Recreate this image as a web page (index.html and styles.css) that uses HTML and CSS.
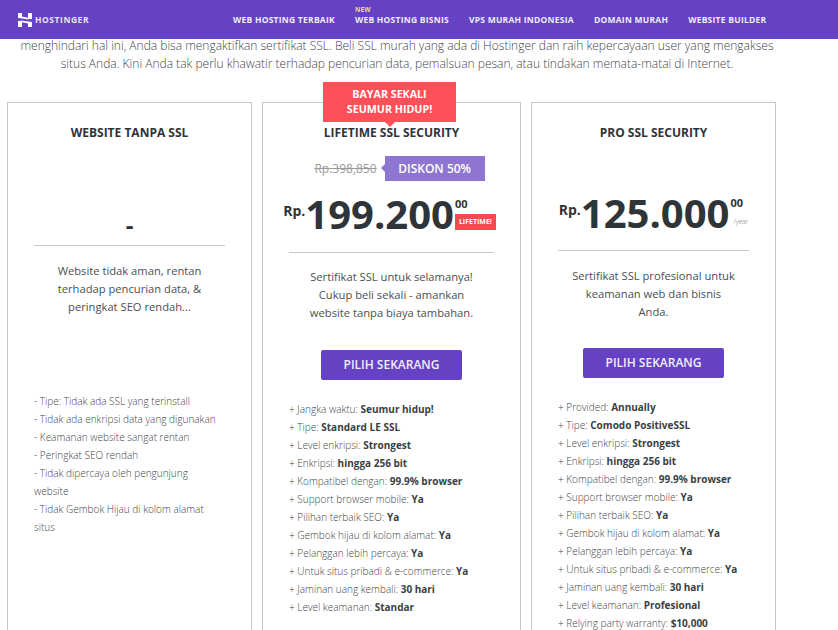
FILE: index.html
```html
<!DOCTYPE html>
<html lang="id">
<head>
    <meta charset="UTF-8">
    <title>Hostinger SSL</title>
    <link rel="stylesheet" href="styles.css">
</head>
<body>
    <div class="navbar">
        <a class="logo">
            <svg width="14" height="14" viewBox="0 0 14 14"><path d="M0 0h4v3.6L11 5v1.4L0 5zM10 0h4v6.3l-4-.7zM0 7.7l4 .6V14H0zM14 14h-4v-3.6L3 9V7.6L14 9z" fill="#fff"/></svg>
            <span>HOSTINGER</span>
        </a>
        <div class="menu">
            <a>WEB HOSTING TERBAIK</a>
            <a class="has-new"><span class="new">NEW</span>WEB HOSTING BISNIS</a>
            <a>VPS MURAH INDONESIA</a>
            <a>DOMAIN MURAH</a>
            <a>WEBSITE BUILDER</a>
        </div>
    </div>

    <div class="intro">
        <p>menghindari hal ini, Anda bisa mengaktifkan sertifikat SSL. Beli SSL murah yang ada di Hostinger dan raih kepercayaan user yang mengakses</p>
        <p>situs Anda. Kini Anda tak perlu khawatir terhadap pencurian data, pemalsuan pesan, atau tindakan memata-matai di Internet.</p>
    </div>

    <div class="plans">
        <div class="plan plan-none">
            <h3>WEBSITE TANPA SSL</h3>
            <div class="price-box">
                <div class="price-none">-</div>
            </div>
            <p class="desc">Website tidak aman, rentan<br>terhadap pencurian data, &amp;<br>peringkat SEO rendah...</p>
            <ul class="features">
                <li>- Tipe: Tidak ada SSL yang terinstall</li>
                <li>- Tidak ada enkripsi data yang digunakan</li>
                <li>- Keamanan website sangat rentan</li>
                <li>- Peringkat SEO rendah</li>
                <li>- Tidak dipercaya oleh pengunjung website</li>
                <li>- Tidak Gembok Hijau di kolom alamat situs</li>
            </ul>
        </div>

        <div class="plan plan-main">
            <div class="ribbon">BAYAR SEKALI<br>SEUMUR HIDUP!</div>
            <h3>LIFETIME SSL SECURITY</h3>
            <div class="discount-row">
                <span class="old-price">Rp.398,850</span>
                <span class="discount">DISKON 50%</span>
            </div>
            <div class="price-box">
                <div class="price">
                    <span class="cur">Rp.</span><span class="amount">199.200</span>
                    <span class="side"><span class="cents">00</span><span class="tag">LIFETIME!</span></span>
                </div>
            </div>
            <p class="desc">Sertifikat SSL untuk selamanya!<br>Cukup beli sekali - amankan<br>website tanpa biaya tambahan.</p>
            <a class="btn">PILIH SEKARANG</a>
            <ul class="features">
                <li>+ Jangka waktu: <b>Seumur hidup!</b></li>
                <li>+ Tipe: <b>Standard LE SSL</b></li>
                <li>+ Level enkripsi: <b>Strongest</b></li>
                <li>+ Enkripsi: <b>hingga 256 bit</b></li>
                <li>+ Kompatibel dengan: <b>99.9% browser</b></li>
                <li>+ Support browser mobile: <b>Ya</b></li>
                <li>+ Pilihan terbaik SEO: <b>Ya</b></li>
                <li>+ Gembok hijau di kolom alamat: <b>Ya</b></li>
                <li>+ Pelanggan lebih percaya: <b>Ya</b></li>
                <li>+ Untuk situs pribadi &amp; e-commerce: <b>Ya</b></li>
                <li>+ Jaminan uang kembali: <b>30 hari</b></li>
                <li>+ Level keamanan: <b>Standar</b></li>
            </ul>
        </div>

        <div class="plan plan-pro">
            <h3>PRO SSL SECURITY</h3>
            <div class="price-box">
                <div class="price">
                    <span class="cur">Rp.</span><span class="amount">125.000</span>
                    <span class="side"><span class="cents">00</span><span class="per">/year</span></span>
                </div>
            </div>
            <p class="desc">Sertifikat SSL profesional untuk<br>keamanan web dan bisnis<br>Anda.</p>
            <a class="btn">PILIH SEKARANG</a>
            <ul class="features">
                <li>+ Provided: <b>Annually</b></li>
                <li>+ Tipe: <b>Comodo PositiveSSL</b></li>
                <li>+ Level enkripsi: <b>Strongest</b></li>
                <li>+ Enkripsi: <b>hingga 256 bit</b></li>
                <li>+ Kompatibel dengan: <b>99.9% browser</b></li>
                <li>+ Support browser mobile: <b>Ya</b></li>
                <li>+ Pilihan terbaik SEO: <b>Ya</b></li>
                <li>+ Gembok hijau di kolom alamat: <b>Ya</b></li>
                <li>+ Pelanggan lebih percaya: <b>Ya</b></li>
                <li>+ Untuk situs pribadi &amp; e-commerce: <b>Ya</b></li>
                <li>+ Jaminan uang kembali: <b>30 hari</b></li>
                <li>+ Level keamanan: <b>Profesional</b></li>
                <li>+ Relying party warranty: <b>$10,000</b></li>
            </ul>
        </div>
    </div>
</body>
</html>
```
FILE: styles.css
```css
* {
    margin: 0;
    padding: 0;
    box-sizing: border-box;
}

html, body {
    height: 630px;
    overflow: hidden;
}

body {
    background: #fff;
    color: #2f3439;
    font-family: "Open Sans", sans-serif;
}

.navbar {
    height: 39px;
    background: #6542c3;
    display: flex;
    align-items: center;
    padding-left: 18px;
}

.logo {
    display: flex;
    align-items: center;
    gap: 3px;
    color: #e8e3f6;
    font-size: 8.5px;
    font-weight: 700;
    letter-spacing: .55px;
    width: 215px;
}

.menu {
    display: flex;
    gap: 20px;
}

.menu a {
    color: #efecf9;
    font-size: 8.5px;
    font-weight: 700;
    letter-spacing: .25px;
    position: relative;
}

.new {
    position: absolute;
    left: 0;
    top: -9px;
    color: #f2d58c;
    font-size: 6.5px;
}

.intro {
    height: 63px;
    margin-top: -2px;
    margin-bottom: 2px;
    padding-right: 44px;
    text-align: center;
    font-size: 12px;
    font-weight: 300;
    line-height: 18px;
    color: #3f4449;
}

.plans {
    display: flex;
    gap: 10px;
    padding-left: 7px;
    align-items: flex-start;
}

.plan {
    position: relative;
    border: 1px solid #c8c8c8;
    border-bottom: 0;
    height: 560px;
    width: 245px;
    text-align: center;
    padding: 0 26px;
}

.plan-main {
    width: 259px;
}

.plan h3 {
    font-size: 12px;
    font-weight: 700;
    line-height: 16px;
    margin-top: 22px;
    color: #2f3439;
}

.ribbon {
    position: absolute;
    left: 60px;
    top: -21px;
    width: 133px;
    height: 40px;
    background: #ff4f58;
    color: #fff;
    font-size: 10.7px;
    font-weight: 700;
    line-height: 15px;
    padding-top: 5px;
}

.ribbon::after {
    content: "";
    position: absolute;
    left: 62px;
    bottom: -5px;
    border-left: 5px solid transparent;
    border-right: 5px solid transparent;
    border-top: 5px solid #ff4f58;
}

.discount-row {
    display: flex;
    justify-content: center;
    align-items: center;
    margin-top: 15px;
    margin-left: 8px;
    margin-right: -8px;
    height: 25px;
    gap: 8px;
}

.old-price {
    color: #9a9a9a;
    font-size: 12px;
    text-decoration: line-through;
}

.discount {
    position: relative;
    background: #8e75d1;
    color: #fff;
    font-size: 12px;
    font-weight: 600;
    width: 100px;
    height: 25px;
    line-height: 25px;
}

.discount::before {
    content: "";
    position: absolute;
    left: -4px;
    top: 8px;
    border-top: 4px solid transparent;
    border-bottom: 4px solid transparent;
    border-right: 4px solid #8e75d1;
}

.price-box {
    border-bottom: 1px solid #c8c8c8;
    display: flex;
    justify-content: center;
    height: 72px;
}

.plan-none .price-box {
    height: 105px;
    padding-top: 68px;
}

.plan-pro .price-box {
    height: 110px;
    padding-top: 39px;
}

.price {
    display: flex;
    align-items: flex-start;
    color: #2f3439;
    padding-top: 12px;
}

.plan-main .price {
    margin-right: 4px;
}

.price-none {
    font-size: 24px;
    font-weight: 700;
    line-height: 32px;
}

.cur {
    font-size: 14px;
    font-weight: 700;
    margin-top: 8px;
}

.amount {
    font-size: 40px;
    font-weight: 700;
    line-height: 42px;
}

.side {
    display: flex;
    flex-direction: column;
    align-items: flex-start;
    margin-left: 1px;
    padding-top: 4px;
}

.cents {
    font-size: 11px;
    font-weight: 700;
    line-height: 14px;
}

.tag {
    background: #ef4b52;
    color: #fff;
    font-size: 7px;
    font-weight: 700;
    padding: 0 4px;
    line-height: 16px;
    margin-top: 3px;
}

.per {
    font-size: 6.5px;
    font-weight: 300;
    color: #777;
    margin-top: 7px;
    margin-left: 3px;
}

.desc {
    font-size: 11.2px;
    line-height: 18px;
    margin-top: 16px;
    color: #4a4f54;
}

.plan-main .desc {
    margin-top: 15px;
}

.btn {
    display: block;
    width: 141px;
    height: 30px;
    margin: 28px auto 0;
    background: #6542c3;
    color: #f2effa;
    border-radius: 2px;
    font-size: 12px;
    font-weight: 600;
    line-height: 30px;
}

.plan-pro .btn {
    margin-top: 27px;
}

.features {
    list-style: none;
    text-align: left;
    font-size: 10px;
    font-weight: 300;
    line-height: 18px;
    color: #3f4449;
}

.plan-none .features {
    margin-top: 76px;
    padding-right: 5px;
}

.plan-main .features,
.plan-pro .features {
    margin-top: 20px;
}

.features b {
    font-weight: 700;
    color: #3b3f43;
}
```
